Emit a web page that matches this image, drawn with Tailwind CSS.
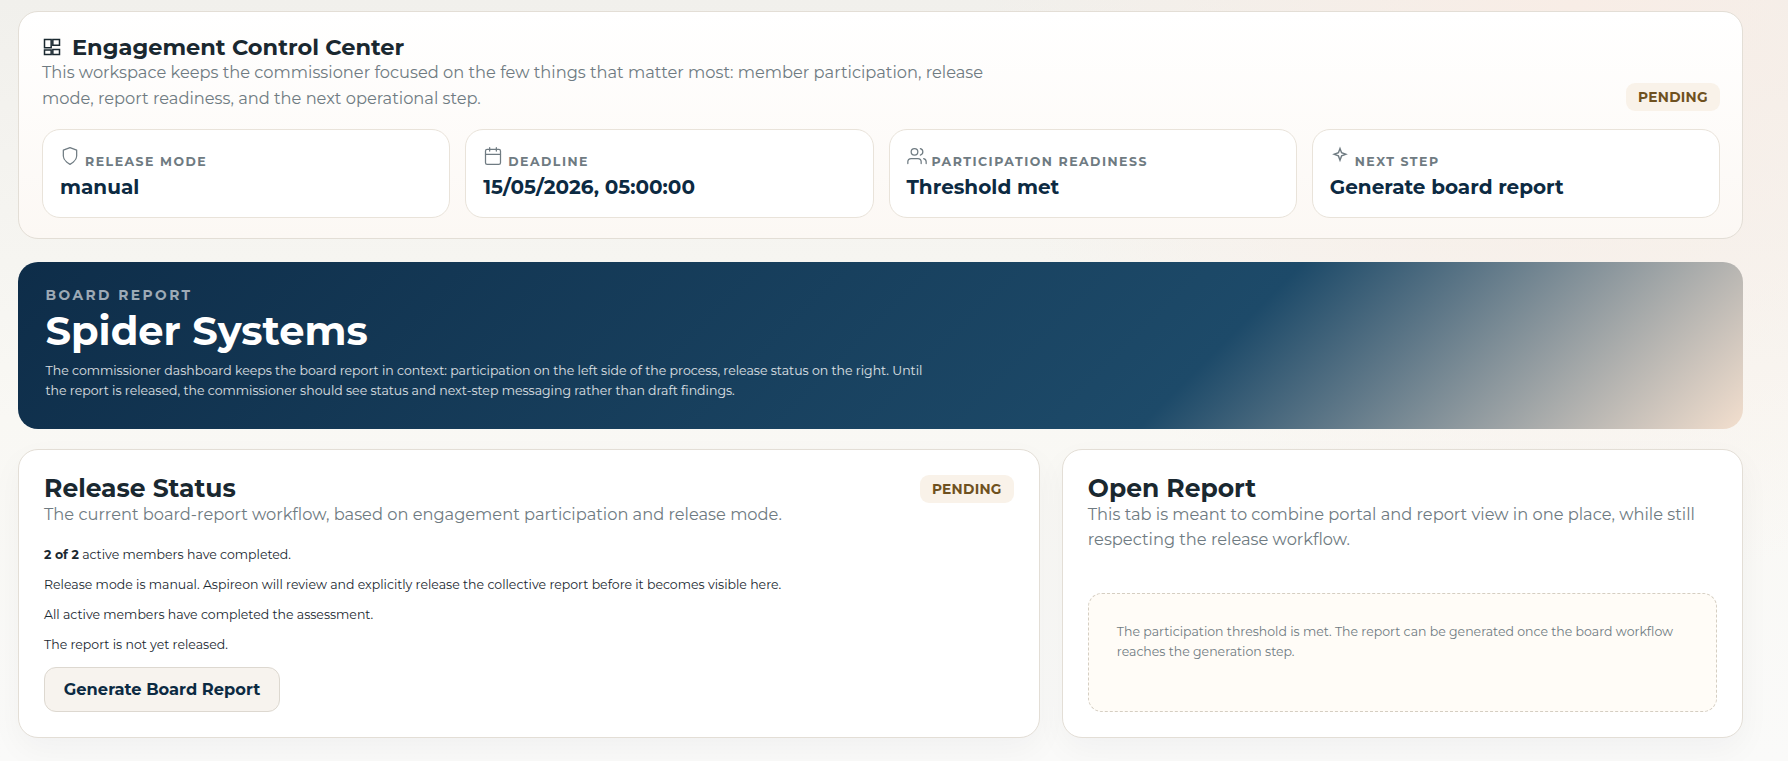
<!DOCTYPE html>
<html lang="en">

<head>
    <meta charset="UTF-8">
    <meta name="viewport" content="width=device-width, initial-scale=1.0">
    <title>Engagement Control Center</title>
    <script src="https://cdn.jsdelivr.net/npm/@tailwindcss/browser@4"></script>
</head>

<body class="h-[761px] overflow-hidden bg-[radial-gradient(circle_at_88%_0%,#f8ede6_0%,#f8ede600_34%),linear-gradient(180deg,#f1f0ec_0%,#f9f8f4_55%,#fafaf9_100%)] pt-[11px] pr-[45px] pl-[18px] font-['Montserrat','Inter',sans-serif] text-[#1a2830]">

    <!-- Control center -->
    <section class="h-[228px] rounded-[20px] border border-[#e3ded6] bg-gradient-to-b from-white to-[#fcf8f4] pt-[22px] pr-[22px] pl-[23px]">
        <div class="flex h-[95px] items-end justify-between">
            <div class="h-full">
                <h1 class="flex h-[25px] items-center gap-[10px] pt-0.5 text-[22.5px] font-bold whitespace-nowrap">
                    <svg class="mb-px h-5 w-5" viewBox="0 0 24 24" fill="none" stroke="currentColor" stroke-width="1.8">
                        <path d="M3 3h8v10H3zM13 3h8v7h-8zM3 15.5h8V21H3zM13 15h8v6h-8z" />
                    </svg>
                    Engagement Control Center
                </h1>
                <p class="text-[16.25px] leading-[26px] whitespace-nowrap text-[#6f7b82]">This workspace keeps the commissioner focused on the few things that matter most: member participation, release<br>mode, report readiness, and the next operational step.</p>
            </div>
            <span class="mb-[18px] flex h-7 w-[94px] items-center justify-center rounded-[9px] bg-[#f9f2e9] text-[13.75px] font-bold tracking-[0.02em] text-[#6f5120]">PENDING</span>
        </div>

        <div class="grid grid-cols-4 gap-[15px]">
            <div class="h-[89px] rounded-[18px] border border-[#e9e3da] bg-white px-[17px] pt-4">
                <div class="flex h-[23px] items-end gap-[5px] text-[12.5px] leading-[15px] font-bold tracking-[0.12em] text-[#6f7b82]">
                    <svg class="mb-[3px] h-5 w-5 shrink-0" viewBox="0 0 24 24" fill="none" stroke="currentColor" stroke-width="1.5" stroke-linecap="round" stroke-linejoin="round">
                        <path d="M12 22s8-4 8-10V5l-8-3-8 3v7c0 6 8 10 8 10z" />
                    </svg>
                    RELEASE MODE
                </div>
                <div class="mt-1 text-xl leading-7 font-bold text-[#0c2a42]">manual</div>
            </div>
            <div class="h-[89px] rounded-[18px] border border-[#e9e3da] bg-white px-[17px] pt-4">
                <div class="flex h-[23px] items-end gap-[5px] text-[12.5px] leading-[15px] font-bold tracking-[0.12em] text-[#6f7b82]">
                    <svg class="mb-[3px] h-5 w-5 shrink-0" viewBox="0 0 24 24" fill="none" stroke="currentColor" stroke-width="1.5" stroke-linecap="round" stroke-linejoin="round">
                        <rect x="3" y="4" width="18" height="18" rx="2" />
                        <path d="M16 2v4M8 2v4M3 10h18" />
                    </svg>
                    DEADLINE
                </div>
                <div class="mt-1 text-xl leading-7 font-bold text-[#0c2a42]">15/05/2026, 05:00:00</div>
            </div>
            <div class="h-[89px] rounded-[18px] border border-[#e9e3da] bg-white px-[17px] pt-4">
                <div class="flex h-[23px] items-end gap-[5px] text-[12.5px] leading-[15px] font-bold tracking-[0.12em] text-[#6f7b82]">
                    <svg class="mb-[3px] h-5 w-5 shrink-0" viewBox="0 0 24 24" fill="none" stroke="currentColor" stroke-width="1.5" stroke-linecap="round" stroke-linejoin="round">
                        <path d="M17 21v-2a4 4 0 0 0-4-4H5a4 4 0 0 0-4 4v2" />
                        <circle cx="9" cy="7" r="4" />
                        <path d="M23 21v-2a4 4 0 0 0-3-3.87M16 3.13a4 4 0 0 1 0 7.75" />
                    </svg>
                    PARTICIPATION READINESS
                </div>
                <div class="mt-1 text-xl leading-7 font-bold text-[#0c2a42]">Threshold met</div>
            </div>
            <div class="h-[89px] rounded-[18px] border border-[#e9e3da] bg-white px-[17px] pt-4">
                <div class="flex h-[23px] items-end gap-[5px] text-[12.5px] leading-[15px] font-bold tracking-[0.12em] text-[#6f7b82]">
                    <svg class="mb-[3px] h-5 w-5 shrink-0" viewBox="0 0 24 24" fill="none" stroke="currentColor" stroke-width="1.7">
                        <path d="M12 3l1.9 5.1L19 10l-5.1 1.9L12 17l-1.9-5.1L5 10l5.1-1.9z" />
                    </svg>
                    NEXT STEP
                </div>
                <div class="mt-1 text-xl leading-7 font-bold text-[#0c2a42]">Generate board report</div>
            </div>
        </div>
    </section>

    <!-- Hero -->
    <section class="mt-[23px] h-[167px] rounded-[20px] bg-[linear-gradient(135deg,#0e2d49_0%,#1d4a69_68%,#f3dfce_100%)] px-[27.5px] pt-[25px]">
        <div class="text-[13.75px] leading-4 font-bold tracking-[0.18em] text-white/60">BOARD REPORT</div>
        <h2 class="mt-1 text-[40px] leading-[48px] font-bold text-white">Spider Systems</h2>
        <p class="mt-1.5 text-[12.5px] leading-5 whitespace-nowrap text-white/85">The commissioner dashboard keeps the board report in context: participation on the left side of the process, release status on the right. Until<br>the report is released, the commissioner should see status and next-step messaging rather than draft findings.</p>
    </section>

    <div class="mt-5 grid grid-cols-[3fr_2fr] gap-[22px]">
        <!-- Release status -->
        <section class="h-[289px] min-w-0 rounded-[20px] border border-[#e3ded6] bg-white px-[25px] pt-[25px] shadow-[0_12px_32px_rgba(20,35,40,0.04)]">
            <div class="flex items-start justify-between">
                <div>
                    <h2 class="text-[25px] leading-[27px] font-bold">Release Status</h2>
                    <p class="text-[16.25px] leading-[25px] whitespace-nowrap text-[#6f7b82]">The current board-report workflow, based on engagement participation and release mode.</p>
                </div>
                <span class="flex h-7 w-[94px] items-center justify-center rounded-[9px] bg-[#f9f2e9] text-[13.75px] font-bold tracking-[0.02em] text-[#6f5120]">PENDING</span>
            </div>
            <div class="mt-[18px] flex flex-col gap-[10px] text-[12.5px] leading-5">
                <p><strong>2 of 2</strong> active members have completed.</p>
                <p>Release mode is manual. Aspireon will review and explicitly release the collective report before it becomes visible here.</p>
                <p>All active members have completed the assessment.</p>
                <p>The report is not yet released.</p>
            </div>
            <button class="mt-3 h-[45px] w-[236px] rounded-[12px] border border-[#ddd8d0] bg-[#f7f3ee] text-[16.25px] font-bold whitespace-nowrap text-[#0c2a42]">Generate Board Report</button>
        </section>

        <!-- Open report -->
        <section class="h-[289px] min-w-0 rounded-[20px] border border-[#e3ded6] bg-white px-[25px] pt-[25px] shadow-[0_12px_32px_rgba(20,35,40,0.04)]">
            <h2 class="text-[25px] leading-[27px] font-bold">Open Report</h2>
            <p class="text-[16.25px] leading-[25px] whitespace-nowrap text-[#6f7b82]">This tab is meant to combine portal and report view in one place, while still<br>respecting the release workflow.</p>
            <div class="mt-[41px] h-[119px] rounded-[14px] border border-dashed border-[#d5cec2] bg-[#fffcf7] px-7 pt-7 text-[12.5px] leading-5 whitespace-nowrap text-[#6f7b82]">The participation threshold is met. The report can be generated once the board workflow<br>reaches the generation step.</div>
        </section>
    </div>
</body>

</html>
